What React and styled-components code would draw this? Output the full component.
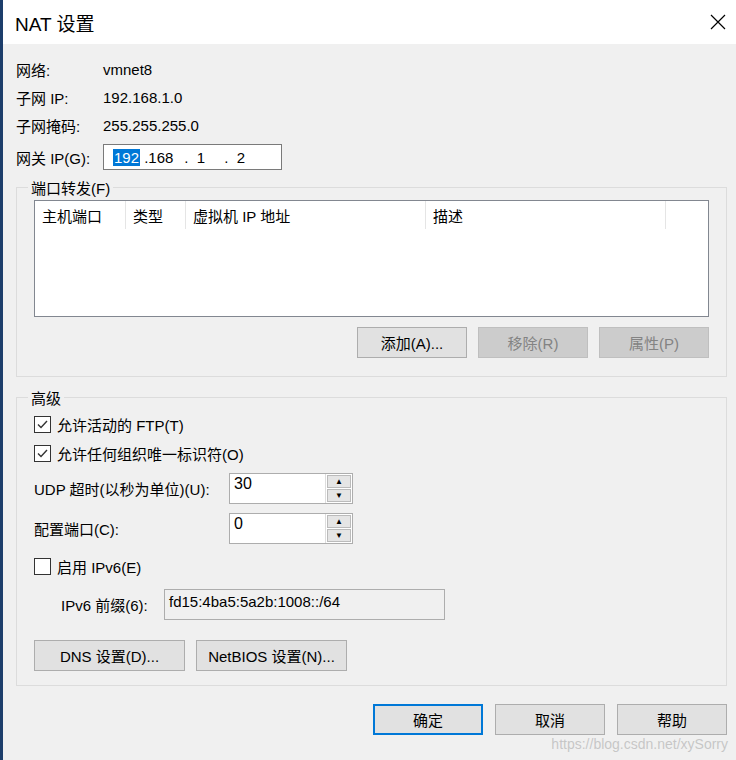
import React from "react";
import styled, { createGlobalStyle } from "styled-components";

const Global = createGlobalStyle`
  body { margin: 0; font-family: "Liberation Sans", "Noto Sans CJK SC", sans-serif; font-size: 15px; color: #000; }
`;

const Window = styled.div`
  width: 736px;
  height: 760px;
  box-sizing: border-box;
  border-left: 3px solid #1d3e6b;
  background: #f0f0f0;
  display: flex;
  flex-direction: column;
  position: relative;
  overflow: hidden;
`;
const TitleBar = styled.div`
  height: 44px;
  background: #fff;
  display: flex;
  align-items: center;
  justify-content: space-between;
  padding: 0 10px 0 12px;
  font-size: 19px;
`;
const Body = styled.div`
  padding: 11px 9px 0 13px;
  display: flex;
  flex-direction: column;
`;
const InfoRow = styled.div`
  display: flex;
  align-items: center;
  height: 28px;
`;
const Label = styled.div`
  width: ${(p) => p.w || 87}px;
`;
const IpBox = styled.div`
  width: 168px;
  height: 24px;
  border: 1px solid #7a7a7a;
  background: #fff;
  display: flex;
  align-items: center;
  padding-left: 9px;
  span { display: inline-block; }
`;
const Sel = styled.span`
  background: #0078d7;
  color: #fff;
  padding: 0 1px;
`;
const Group = styled.fieldset`
  margin: ${(p) => p.mt || 0}px 0 0 0;
  border: 1px solid #dcdcdc;
  padding: 2px 17px 10px 17px;
  height: ${(p) => p.h}px;
  box-sizing: border-box;
  legend { padding: 0 3px; margin-left: -6px; }
`;
const List = styled.div`
  height: 117px;
  border: 1px solid #828790;
  background: #fff;
  box-sizing: border-box;
`;
const HeadRow = styled.div`
  display: flex;
  height: 28px;
`;
const Col = styled.div`
  width: ${(p) => p.w}px;
  box-sizing: border-box;
  padding-left: 7px;
  border-right: 1px solid #e5e5e5;
  display: flex;
  align-items: center;
  height: 28px;
`;
const BtnRow = styled.div`
  display: flex;
  justify-content: ${(p) => p.justify || "flex-end"};
  gap: ${(p) => p.gap || 11}px;
  margin-top: ${(p) => p.mt || 10}px;
`;
const Button = styled.div`
  width: ${(p) => p.w || 110}px;
  height: 31px;
  box-sizing: border-box;
  display: flex;
  align-items: center;
  justify-content: center;
  background: ${(p) => (p.disabled ? "#cccccc" : "#e1e1e1")};
  color: ${(p) => (p.disabled ? "#838383" : "#000")};
  border: ${(p) => (p.primary ? "2px solid #0078d7" : p.disabled ? "1px solid #bfbfbf" : "1px solid #adadad")};
`;
const CheckRow = styled.div`
  display: flex;
  align-items: center;
  gap: 6px;
  height: 29px;
`;
const Box = styled.div`
  width: 15px;
  height: 15px;
  border: 1px solid #333;
  background: #fff;
  display: flex;
  align-items: center;
  justify-content: center;
`;
const FieldRow = styled.div`
  display: flex;
  align-items: center;
  height: 40px;
`;
const Spin = styled.div`
  display: flex;
  width: 124px;
  height: 31px;
  border: 1px solid #adadad;
  background: #fff;
  box-sizing: border-box;
`;
const SpinText = styled.div`
  flex: 1;
  padding: 1px 4px;
  font-size: 16px;
`;
const Arrows = styled.div`
  width: 24px;
  display: flex;
  flex-direction: column;
  gap: 1px;
  padding: 1px;
  background: #fff;
  border-left: 1px solid #ddd;
`;
const Arrow = styled.div`
  flex: 1;
  background: #e5e5e5;
  border: 1px solid #bbb;
  display: flex;
  align-items: center;
  justify-content: center;
  font-size: 8px;
`;
const PrefixBox = styled.div`
  width: 281px;
  height: 31px;
  border: 1px solid #adadad;
  background: #f0f0f0;
  box-sizing: border-box;
  padding: 3px 4px;
`;
const Footer = styled.div`
  display: flex;
  justify-content: flex-end;
  gap: 12px;
  padding: 18px 9px 0 0;
`;
const Watermark = styled.div`
  position: absolute;
  right: 8px;
  bottom: 8px;
  color: rgba(170,170,170,0.6);
  font-size: 14px;
`;

const Check = () => (
  <svg width="11" height="9" viewBox="0 0 11 9"><path d="M1 4.5 L4 7.5 L10 1" fill="none" stroke="#333" strokeWidth="1.4" /></svg>
);

const SpinBox = ({ value }) => (
  <Spin>
    <SpinText>{value}</SpinText>
    <Arrows>
      <Arrow>▲</Arrow>
      <Arrow>▼</Arrow>
    </Arrows>
  </Spin>
);

export default function App() {
  return (
    <Window>
      <Global />
      <TitleBar>
        <span>NAT 设置</span>
        <svg width="16" height="16" viewBox="0 0 16 16"><path d="M1 1 L15 15 M15 1 L1 15" stroke="#000" strokeWidth="1.2" /></svg>
      </TitleBar>
      <Body>
        <InfoRow><Label>网络:</Label>vmnet8</InfoRow>
        <InfoRow><Label>子网 IP:</Label>192.168.1.0</InfoRow>
        <InfoRow><Label>子网掩码:</Label>255.255.255.0</InfoRow>
        <InfoRow style={{ height: 36 }}>
          <Label>网关 IP(G):</Label>
          <IpBox>
            <Sel>192</Sel><span style={{ width: 40 }}>&nbsp;.168</span><span style={{ width: 36 }}>&nbsp;.&nbsp;&nbsp;1</span><span>&nbsp;&nbsp;.&nbsp;&nbsp;2</span>
          </IpBox>
        </InfoRow>
        <Group h={200} mt={2}>
          <legend>端口转发(F)</legend>
          <List>
            <HeadRow>
              <Col w={91}>主机端口</Col>
              <Col w={60}>类型</Col>
              <Col w={240}>虚拟机 IP 地址</Col>
              <Col w={240}>描述</Col>
            </HeadRow>
          </List>
          <BtnRow>
            <Button>添加(A)...</Button>
            <Button disabled>移除(R)</Button>
            <Button disabled>属性(P)</Button>
          </BtnRow>
        </Group>
        <Group h={299} mt={10}>
          <legend>高级</legend>
          <CheckRow><Box><Check /></Box>允许活动的 FTP(T)</CheckRow>
          <CheckRow><Box><Check /></Box>允许任何组织唯一标识符(O)</CheckRow>
          <FieldRow><Label w={195}>UDP 超时(以秒为单位)(U):</Label><SpinBox value="30" /></FieldRow>
          <FieldRow><Label w={195}>配置端口(C):</Label><SpinBox value="0" /></FieldRow>
          <CheckRow style={{ height: 36 }}><Box />启用 IPv6(E)</CheckRow>
          <FieldRow style={{ paddingLeft: 27 }}><Label w={103}>IPv6 前缀(6):</Label><PrefixBox>fd15:4ba5:5a2b:1008::/64</PrefixBox></FieldRow>
          <BtnRow justify="flex-start" mt={16}>
            <Button w={151}>DNS 设置(D)...</Button>
            <Button w={151}>NetBIOS 设置(N)...</Button>
          </BtnRow>
        </Group>
      </Body>
      <Footer>
        <Button primary>确定</Button>
        <Button>取消</Button>
        <Button>帮助</Button>
      </Footer>
      <Watermark>https://blog.csdn.net/xySorry</Watermark>
    </Window>
  );
}
